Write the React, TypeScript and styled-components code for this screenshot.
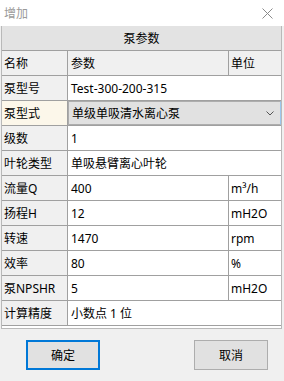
import * as React from 'react'
import styled, { createGlobalStyle } from 'styled-components'

const GlobalStyle = createGlobalStyle`
  html, body {
    margin: 0;
    padding: 0;
    background: #f0f0f0;
  }
  * {
    box-sizing: border-box;
  }
`

const Window = styled.div`
  width: 284px;
  height: 381px;
  background: #f0f0f0;
  font-family: "Noto Sans", "Noto Sans CJK SC", sans-serif;
  font-size: 12px;
  color: #000;
  overflow: hidden;
`

const TitleBar = styled.div`
  height: 26px;
  background: #fff;
  display: flex;
  align-items: center;
  justify-content: space-between;
  padding: 0 11px 0 4px;
  color: #9a9a9a;
`

const Title = styled.span`
  font-size: 12px;
`

const Close = styled.svg`
  width: 11px;
  height: 11px;
`

const Frame = styled.div`
  margin-left: 1px;
  width: 281px;
  background: #fff;
  border: 1px solid #b9b9b9;
  border-top: none;
  padding-bottom: 2px;
`

const Table = styled.div`
  display: grid;
  grid-template-columns: 65px 160px 52px;
  grid-auto-rows: 24px;
  gap: 1px;
  background: #a0a0a0;
  border-bottom: 1px solid #a0a0a0;
`

interface CellProps {
  span?: number
  center?: boolean
  pad?: number
}

const Cell = styled.div<CellProps>`
  display: flex;
  align-items: center;
  justify-content: ${p => p.center ? 'center' : 'flex-start'};
  padding-left: ${p => p.center ? 0 : (p.pad ?? 2)}px;
  white-space: nowrap;
  overflow: hidden;
  ${p => p.span ? `grid-column: span ${p.span};` : ''}
`

const Band = styled(Cell)`
  background: #e3e3e3;
`

const HeadCell = styled(Cell)`
  background: #f0f0f0;
`

const NameCell = styled(Cell)<{ active?: boolean }>`
  background: ${p => p.active ? '#fcf7ea' : '#f0f0f0'};
`

const ValueCell = styled(Cell)`
  background: #fff;
`

const Combo = styled.div`
  grid-column: span 2;
  display: flex;
  align-items: center;
  justify-content: space-between;
  background: #e1e1e1;
  border: 1px solid #adadad;
  border-right: 1px solid #9cc7ee;
  padding: 0 6px 0 3px;
`

const Chevron = styled.svg`
  width: 8px;
  height: 5px;
`

const Footer = styled.div`
  display: flex;
  justify-content: space-between;
  padding: 11px 16px 0 26px;
`

const Button = styled.div<{ primary?: boolean }>`
  width: 74px;
  height: 30px;
  display: flex;
  align-items: center;
  justify-content: center;
  background: #e1e1e1;
  border: ${p => p.primary ? '2px solid #0078d7' : '1px solid #adadad'};
`

interface Row {
  name: string
  value: string
  unit?: string
}

const rows: Row[] = [
  { name: '泵型号', value: 'Test-300-200-315' },
  { name: '泵型式', value: '单级单吸清水离心泵' },
  { name: '级数', value: '1' },
  { name: '叶轮类型', value: '单吸悬臂离心叶轮' },
  { name: '流量Q', value: '400', unit: 'm³/h' },
  { name: '扬程H', value: '12', unit: 'mH2O' },
  { name: '转速', value: '1470', unit: 'rpm' },
  { name: '效率', value: '80', unit: '%' },
  { name: '泵NPSHR', value: '5', unit: 'mH2O' },
  { name: '计算精度', value: '小数点 1 位' },
]

export default function App() {
  return (
    <Window>
      <GlobalStyle />
      <TitleBar>
        <Title>增加</Title>
        <Close viewBox="0 0 11 11">
          <path d="M0.5 0.5 L10.5 10.5 M10.5 0.5 L0.5 10.5" stroke="#8a8a8a" strokeWidth="1" fill="none" />
        </Close>
      </TitleBar>
      <Frame>
        <Table>
          <Band span={3} center>泵参数</Band>
          <HeadCell>名称</HeadCell>
          <HeadCell pad={3}>参数</HeadCell>
          <HeadCell>单位</HeadCell>
          {rows.map(r => (
            <React.Fragment key={r.name}>
              <NameCell active={r.name === '泵型式'}>{r.name}</NameCell>
              {r.name === '泵型式' ? (
                <Combo>
                  <span>{r.value}</span>
                  <Chevron viewBox="0 0 8 5">
                    <path d="M0.5 0.5 L4 4 L7.5 0.5" stroke="#555" strokeWidth="1" fill="none" />
                  </Chevron>
                </Combo>
              ) : r.unit ? (
                <>
                  <ValueCell pad={3}>{r.value}</ValueCell>
                  <ValueCell>{r.unit}</ValueCell>
                </>
              ) : (
                <ValueCell pad={3} span={2}>{r.value}</ValueCell>
              )}
            </React.Fragment>
          ))}
        </Table>
      </Frame>
      <Footer>
        <Button primary>确定</Button>
        <Button>取消</Button>
      </Footer>
    </Window>
  )
}
